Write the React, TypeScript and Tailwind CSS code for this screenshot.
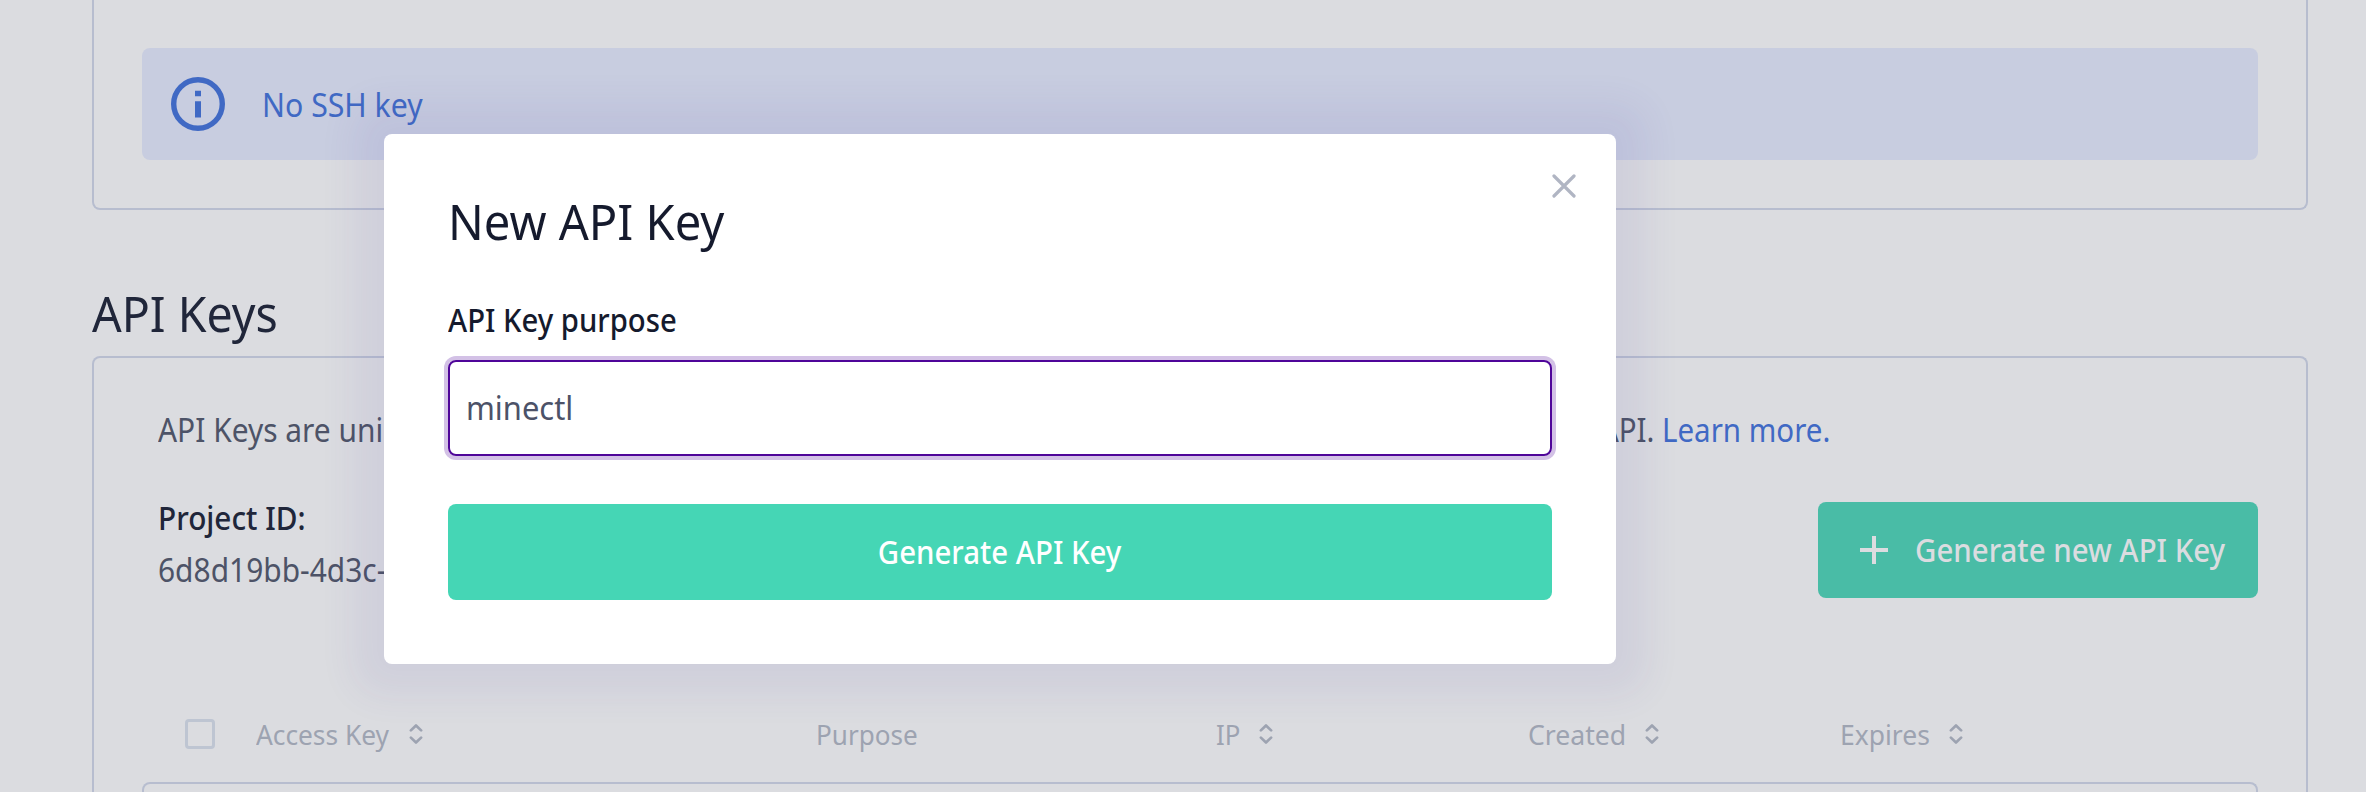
import type { ReactNode } from "react";

function Label({ children, className }: { children: ReactNode; className: string }) {
  return <span className={`inline-block origin-left whitespace-nowrap ${className}`}>{children}</span>;
}

function SortIcon() {
  return (
    <svg width="14" height="20" viewBox="0 0 14 20" fill="none" stroke="currentColor" strokeWidth="2.7" strokeLinecap="round" strokeLinejoin="round">
      <path d="M1.9 6.4 7 1.5l5.1 4.9M1.9 13.6 7 18.5l5.1-4.9" />
    </svg>
  );
}

function InfoIcon() {
  return (
    <svg width="54" height="54" viewBox="0 0 54 54" fill="none">
      <circle cx="27" cy="27" r="24.3" stroke="currentColor" strokeWidth="5.4" />
      <path d="M24 13.8h6v5.4h-6zM24 24.2h6v16.3h-6z" fill="currentColor" />
    </svg>
  );
}

function Column({ width, scale, label, sortable = true }: { width: string; scale: string; label: string; sortable?: boolean }) {
  return (
    <div className="flex items-center">
      <div className={width}>
        <Label className={scale}>{label}</Label>
      </div>
      {sortable && <SortIcon />}
    </div>
  );
}

function SshPanel() {
  return (
    <section className="h-[210px] rounded-b-lg border-2 border-t-0 border-[#b7bdcf] px-12 pt-12">
      <div className="flex h-28 items-center rounded-lg bg-[#c8cde0] pl-[29px] text-[#4069c4]">
        <InfoIcon />
        <Label className="ml-[37px] scale-x-[0.945] pt-0.5">No SSH key</Label>
      </div>
    </section>
  );
}

function ApiKeysPanel() {
  return (
    <section className="h-[460px] rounded-t-lg border-2 border-b-0 border-[#b7bdcf] px-12 pt-[52px]">
      <p className="flex pl-4">
        <span className="w-[1442px]">
          <Label className="scale-x-[0.935]">API Keys are unique</Label>
        </span>
        <span className="w-[62px]">
          <Label className="scale-x-[0.92]">API.</Label>
        </span>
        <a className="text-[#4069c4]">
          <Label className="scale-x-[0.922]">Learn more.</Label>
        </a>
      </p>
      <div className="mt-12 flex items-start justify-between pl-4">
        <div className="flex flex-col gap-3">
          <Label className="scale-x-[0.93] font-medium text-[#20263a]">Project ID:</Label>
          <Label className="scale-x-[0.935]">6d8d19bb-4d3c-</Label>
        </div>
        <button className="mt-1 flex h-24 w-[440px] items-center rounded-lg bg-[#49bca6] pl-[42px] font-medium text-[#dbdce0]">
          <svg width="28" height="28" viewBox="0 0 28 28" stroke="currentColor" strokeWidth="4">
            <path d="M14 0v28M0 14h28" />
          </svg>
          <Label className="ml-[27px] scale-x-[0.92]">Generate new API Key</Label>
        </button>
      </div>
      <div className="mt-24 grid h-20 grid-cols-[114px_560px_400px_312px_312px_1fr] items-center text-[28px] text-[#9da3b1]">
        <div className="ml-[43px] size-[30px] rounded-[4px] border-3 border-[#bec5d2]" />
        <Column width="w-[153px]" scale="scale-x-[0.939]" label="Access Key" />
        <Column width="w-[101px]" scale="scale-x-[0.931]" label="Purpose" sortable={false} />
        <Column width="w-[43px]" scale="scale-x-[0.92]" label="IP" />
        <Column width="w-[117px]" scale="scale-x-[0.95]" label="Created" />
        <Column width="w-[109px]" scale="scale-x-[0.945]" label="Expires" />
      </div>
      <div className="mt-2 h-5 rounded-t-lg border-2 border-b-0 border-[#b7bdcf]" />
    </section>
  );
}

function NewKeyDialog() {
  return (
    <div role="dialog" className="absolute top-[134px] left-96 h-[530px] w-[1232px] rounded-lg bg-white px-16 pt-[57px] text-[#151a2d] shadow-[0_0_36px_30px_rgba(80,60,165,0.08)]">
      <svg className="absolute top-10 right-10" width="24" height="24" viewBox="0 0 24 24" stroke="#b0b5c3" strokeWidth="3.2" strokeLinecap="round">
        <path d="m2 2 20 20M22 2 2 22" />
      </svg>
      <h2 className="text-[50px] leading-[60px]">
        <Label className="scale-x-[0.942]">New API Key</Label>
      </h2>
      <div className="mt-[49px] h-[60px] font-medium">
        <Label className="scale-x-[0.915]">API Key purpose</Label>
      </div>
      <div className="flex h-24 items-center rounded-lg border-2 border-[#4f0599] pl-4 text-[#4c5268] ring-4 ring-[#d3c1e6]">
        <Label className="scale-x-[0.965]">minectl</Label>
      </div>
      <button className="mt-12 flex h-24 w-full items-center justify-center rounded-lg bg-[#45d6b5] font-medium text-white">
        <span className="inline-block scale-x-[0.918]">Generate API Key</span>
      </button>
    </div>
  );
}

export default function App() {
  return (
    <main className="relative h-[792px] w-full overflow-hidden bg-[#dbdce0] pr-[58px] pl-[92px] font-['Noto_Sans',sans-serif] text-[32px] leading-10 text-[#4d5367]">
      <SshPanel />
      <h1 className="h-[146px] pt-[73px] text-[50px] leading-[60px] text-[#20263a]">
        <Label className="scale-x-[0.93]">API Keys</Label>
      </h1>
      <ApiKeysPanel />
      <NewKeyDialog />
    </main>
  );
}
